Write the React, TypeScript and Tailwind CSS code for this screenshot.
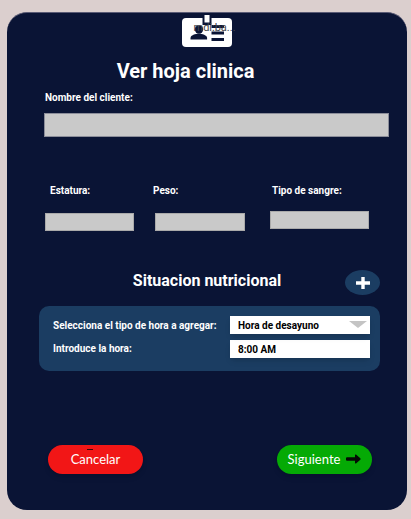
import type { ReactNode } from 'react';

function BadgeIcon() {
  return (
    <div className="relative h-8 w-[50px]">
      <svg viewBox="0 0 50 32" className="h-8 w-[50px]" aria-hidden="true">
        <rect x="0" y="3" width="50" height="29" rx="4" fill="#fff" />
        <rect x="20.5" y="0" width="9" height="10" fill="#0a1435" />
        <rect x="22.5" y="0" width="5" height="7.5" fill="#fff" />
        <circle cx="17" cy="14.5" r="4.2" fill="#0a1435" />
        <path d="M8.500 24.500v-1.500c0-2.800 5-4.200 8.300-4.200s8.300 1.400 8.300 4.200v1.500z" fill="#0a1435" />
        <path d="M29.500 10h12.500v3H29.500zM29.500 16.500h12.500v3H29.500zM29.500 23h12.500v3H29.500z" fill="#0a1435" />
      </svg>
      <span className="absolute top-[7px] left-3 text-[11px] leading-3 text-[#44464c]">mdi:ba...</span>
    </div>
  );
}

function Field({ id, label, className, labelClass }: { id: string; label: string; className: string; labelClass: string }) {
  return (
    <div className={`flex flex-col ${className}`}>
      <label htmlFor={id} className={`text-[10px] leading-3 font-bold text-white ${labelClass}`}>
        {label}
      </label>
      <input id={id} className="h-[18px] w-full border border-[#aaa] bg-[#c9c9c9] px-1 text-[10px] text-black" />
    </div>
  );
}

function Pill({ className, children }: { className: string; children: ReactNode }) {
  return (
    <button
      type="button"
      className={`flex h-[29px] w-[95px] items-center justify-center rounded-full pb-0.5 font-[Lato,sans-serif] text-[13px] leading-4 text-white shadow-md ${className}`}
    >
      {children}
    </button>
  );
}

export default function App() {
  return (
    <div className="min-h-screen bg-[#dbcfce] pt-3 pr-1 pb-2 pl-[7px] font-[Roboto,sans-serif]">
      <main className="flex flex-col rounded-[20px] border-t border-[#5a5b75] bg-[#0a1435] pt-0.5 pr-[18px] pb-9 pl-8">
        <div className="flex justify-center pr-[15px]">
          <BadgeIcon />
        </div>
        <h1 className="mt-3 pr-[57px] text-center text-xl leading-6 font-bold text-white">Ver hoja clinica</h1>

        <div className="mt-[9px] flex flex-col pl-[5px]">
          <label htmlFor="cliente" className="pl-px text-[10px] leading-3 font-bold text-white">
            Nombre del cliente:
          </label>
          <input id="cliente" className="mt-[9px] h-6 w-full border border-[#8b8d99] bg-[#c9c9c9] px-1 text-xs text-black" />
        </div>

        <div className="mt-12 grid grid-cols-[110fr_115fr_119fr] pl-1.5">
          <Field id="estatura" label="Estatura:" className="pr-[21px]" labelClass="mb-4 pl-[5px]" />
          <Field id="peso" label="Peso:" className="pr-[25px]" labelClass="mb-4 -ml-0.5" />
          <Field id="sangre" label="Tipo de sangre:" className="pr-5" labelClass="mb-3.5 pl-0.5" />
        </div>

        <div className="mt-[39px] flex items-center pr-[9px]">
          <h2 className="flex-1 pb-1 pl-[30px] text-center text-base leading-5 font-bold text-white">Situacion nutricional</h2>
          <button
            type="button"
            aria-label="Agregar"
            className="flex h-[25px] w-[35px] items-center justify-center rounded-[50%] bg-[#1b3d62]"
          >
            <svg viewBox="0 0 14 12" className="h-3 w-3.5" aria-hidden="true">
              <path d="M5.300 0h3.400v4.300H14v3.400H8.700V12H5.300V7.700H0V4.300h5.300z" fill="#fff" />
            </svg>
          </button>
        </div>

        <section className="mt-[11px] mr-[9px] grid grid-cols-[1fr_140px] items-center gap-y-1.5 rounded-[10px] bg-[#1b3d62] pt-2.5 pr-2.5 pb-[13px] pl-3.5">
          <label htmlFor="tipo" className="pt-0.5 text-[10px] leading-3 font-bold whitespace-nowrap text-white">
            Selecciona el tipo de hora a agregar:
          </label>
          <div className="relative">
            <select
              id="tipo"
              defaultValue="desayuno"
              className="block h-[18px] w-full appearance-none bg-white pt-0.5 pr-6 pl-2 text-[10px] leading-3 font-bold text-black shadow-md"
            >
              <option value="desayuno">Hora de desayuno</option>
            </select>
            <svg viewBox="0 0 18 7" className="pointer-events-none absolute top-[5px] right-[3px] h-[7px] w-[18px]" aria-hidden="true">
              <path d="M0 0h18L9 7z" fill="#c4c4c4" />
            </svg>
          </div>
          <label htmlFor="hora" className="text-[10px] leading-3 font-bold text-white">
            Introduce la hora:
          </label>
          <input id="hora" defaultValue="8:00 AM" className="block h-[18px] w-full bg-white px-2 text-[10px] leading-3 font-bold text-black shadow-md" />
        </section>

        <div className="mt-[74px] flex justify-between pr-[17px] pl-[9px]">
          <Pill className="relative bg-[#f21616]">
            Cancelar
            <span className="absolute top-1 left-[39px] h-px w-1.5 bg-[#3a0808]" />
          </Pill>
          <Pill className="gap-1.5 bg-[#05aa05]">
            Siguiente
            <svg viewBox="0 0 15 10" className="h-2.5 w-[15px]" aria-hidden="true">
              <path d="M1 3.300h8V1.200Q9 0 10 .6l4.300 3.600q.7.800 0 1.600L10 9.400Q9 10 9 8.800V6.700H1Q0 6.700 0 5.700V4.300Q0 3.300 1 3.300z" fill="#050b05" />
            </svg>
          </Pill>
        </div>
      </main>
    </div>
  );
}
